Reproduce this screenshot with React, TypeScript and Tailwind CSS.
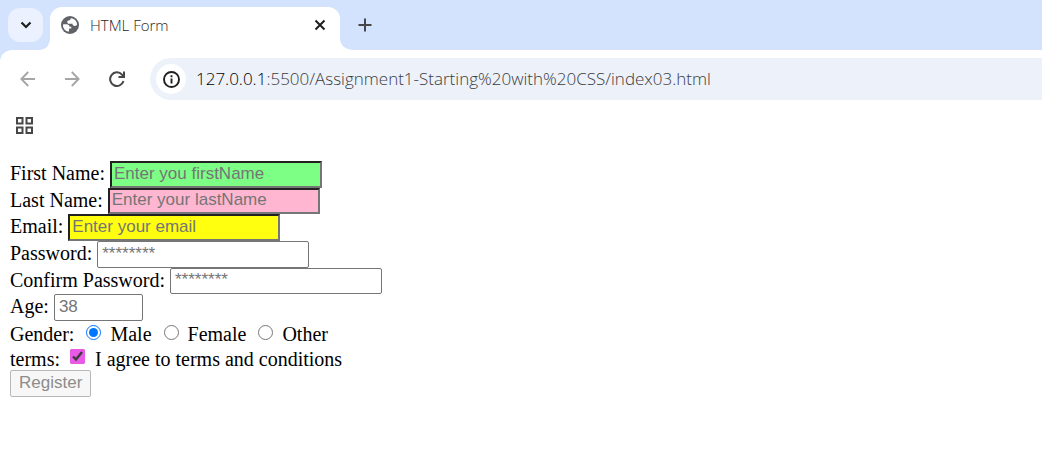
import { useState } from "react";
import type { InputHTMLAttributes } from "react";

function BrowserChrome() {
  return (
    <header className="bg-[#d3e3fd] font-['Open_Sans','Noto_Sans',sans-serif]">
      <div className="flex h-[50px] items-end">
        <div className="flex h-[50px] items-center pl-2">
          <button aria-label="Search tabs" className="flex h-[34px] w-[35px] items-center justify-center rounded-xl bg-[#ebf1fe]">
            <svg width="12" height="8" viewBox="0 0 12 8" fill="none" stroke="#1f1f1f" strokeWidth="2.2">
              <path d="M1.500 1.500 6 6l4.500-4.500" />
            </svg>
          </button>
        </div>
        <svg className="-ml-1 shrink-0" width="11" height="12" viewBox="0 0 11 12" fill="#fff">
          <path d="M0 12C7 12 11 7 11 0v12z" />
        </svg>
        <div className="flex h-[43px] w-[290px] shrink-0 items-center rounded-t-xl bg-white pr-[10px] pb-2 pl-[11px]">
          <svg width="18" height="18" viewBox="0 0 18 18">
            <circle cx="9" cy="9" r="9" fill="#5f6368" />
            <path
              fill="#fff"
              d="M2.200 8.300H5.500c1.900 0 3 .9 3 2.400h1.800v1.900H8v2.900C4.800 15.600 2 12.900 2 9.500zM10.800 2.300c3.200.8 5.300 3.500 5.300 6.500-.7.900-1.500 1.100-2.400 1.100-1.500 0-2.200-.8-2.200-2.100H8.200c-1.300 0-1.900-.8-1.900-1.800 0-1.100.7-1.800 1.900-1.800h.9c0-1.100.6-1.800 1.700-1.900z"
            />
          </svg>
          <span className="ml-[11px] flex-1 text-[15px] leading-5 font-light text-[#1f1f1f]">HTML Form</span>
          <button aria-label="Close tab" className="flex size-5 items-center justify-center">
            <svg width="12" height="12" viewBox="0 0 12 12" stroke="#1f1f1f" strokeWidth="2">
              <path d="m1.500 1.500 9 9m0-9-9 9" />
            </svg>
          </button>
        </div>
        <svg className="shrink-0" width="14" height="12" viewBox="0 0 14 12" fill="#fff">
          <path d="M0 0c0 7 5 12 14 12H0z" />
        </svg>
        <button aria-label="New tab" className="flex h-[50px] w-[22px] items-center justify-center">
          <svg width="14" height="14" viewBox="0 0 14 14" stroke="#474747" strokeWidth="2">
            <path d="M7 .5v13M.5 7h13" />
          </svg>
        </button>
      </div>
      <div className="rounded-tl-xl bg-white pt-2">
        <div className="flex h-[42px] items-center pl-5">
          <button aria-label="Back" className="flex size-4 items-center justify-center">
            <svg width="16" height="16" viewBox="0 0 16 16" fill="none" stroke="#a6a6a6" strokeWidth="1.900">
              <path d="M15 8H2M8.200 1 1.400 8l6.800 7" />
            </svg>
          </button>
          <button aria-label="Forward" className="ml-7 flex size-4 items-center justify-center">
            <svg width="16" height="16" viewBox="0 0 16 16" fill="none" stroke="#a6a6a6" strokeWidth="1.900">
              <path d="M1 8h13M7.800 1l6.800 7-6.800 7" />
            </svg>
          </button>
          <button aria-label="Reload" className="ml-[29px] flex size-4 items-center justify-center">
            <svg width="16" height="16" viewBox="0 0 16 16" fill="none" stroke="#474747" strokeWidth="2">
              <path d="M14.500 10A6.800 6.800 0 1 1 13 3.600L15 6M15 .5V6H9.500" />
            </svg>
          </button>
          <div className="ml-[25px] flex h-full flex-1 items-center rounded-l-full bg-[#ecf1fa] pl-[6px]">
            <button aria-label="View site information" className="flex size-[30px] items-center justify-center rounded-full bg-white">
              <svg width="17" height="17" viewBox="0 0 17 17" fill="none" stroke="#1f1f1f" strokeWidth="1.900">
                <circle cx="8.500" cy="8.500" r="7.500" />
                <path d="M8.500 7.500v5M8.500 4.200v2" />
              </svg>
            </button>
            <span className="ml-[10px] text-[17px] leading-6 font-light text-[#3c3c3c]">
              <span className="text-black">127.0.0.1</span>:5500/Assignment1-Starting%20with%20CSS/index03.html
            </span>
          </div>
        </div>
        <div className="flex h-[52px] items-center pb-[2px] pl-[15px]">
          <button aria-label="Apps" className="flex items-center justify-center">
            <svg width="19" height="19" viewBox="0 0 19 19" fill="none" stroke="#474747" strokeWidth="2">
              <path d="M2 2h5.500v5.500H2zM11.500 2H17v5.500h-5.500zM2 11.500h5.500V17H2zM11.500 11.500H17V17h-5.500z" />
            </svg>
          </button>
        </div>
      </div>
    </header>
  );
}

type FieldProps = InputHTMLAttributes<HTMLInputElement> & { id: string; label: string };

function Field({ id, label, className, ...rest }: FieldProps) {
  return (
    <div className="flex min-h-0 items-stretch gap-[5px]">
      <label htmlFor={id} className="leading-6">
        {label}
      </label>
      <input
        id={id}
        className={`pb-[2px] font-['Liberation_Sans',Arial,sans-serif] text-[17px] text-black placeholder:text-[#757575] ${className}`}
        {...rest}
      />
    </div>
  );
}

const inset = "w-[212px] border-2 border-t-[#212121] border-l-[#212121] border-r-[#767676] border-b-[#767676] px-[2px]";
const outlined = "rounded-xs border border-[#767676] px-1";

export default function App() {
  const [gender, setGender] = useState("Male");
  const [agreed, setAgreed] = useState(true);

  return (
    <div className="min-h-screen bg-white">
      <BrowserChrome />
      <main className="px-[10px] pt-[9px] font-['Liberation_Serif','Times_New_Roman',serif] text-[20px] text-black">
        <form onSubmit={(e) => e.preventDefault()}>
          <div className="grid h-40 grid-rows-6">
            <Field id="first" label="First Name:" placeholder="Enter you firstName" className={`${inset} bg-[#7dff86]`} />
            <Field id="last" label="Last Name:" placeholder="Enter your lastName" className={`${inset} bg-[#ffb6d0]`} />
            <Field id="email" type="email" label="Email:" placeholder="Enter your email" className={`${inset} bg-[#ffff0f]`} />
            <Field id="password" type="password" label="Password:" placeholder="********" className={`${outlined} w-[212px]`} />
            <Field id="confirm" type="password" label="Confirm Password:" placeholder="********" className={`${outlined} w-[212px]`} />
            <Field id="age" type="number" label="Age:" placeholder="38" className={`${outlined} w-[89px]`} />
          </div>
          <div role="radiogroup" aria-label="Gender" className="flex h-[26px] items-center leading-6">
            <span className="mr-3">Gender:</span>
            {["Male", "Female", "Other"].map((option) => (
              <label key={option} className="mr-3 flex items-center gap-[9px]">
                <input
                  type="radio"
                  name="gender"
                  className="mb-1 size-[15px] accent-[#0075ff]"
                  checked={gender === option}
                  onChange={() => setGender(option)}
                />
                {option}
              </label>
            ))}
          </div>
          <div className="flex h-[23px] items-center leading-6">
            <span className="mr-[10px]">terms:</span>
            <label className="flex items-center gap-[10px]">
              <input
                type="checkbox"
                className="mb-1 size-[15px] accent-[#e959e6]"
                checked={agreed}
                onChange={(e) => setAgreed(e.target.checked)}
              />
              I agree to terms and conditions
            </label>
          </div>
          <button
            type="submit"
            disabled
            className="flex h-[27px] items-center rounded-xs border border-[#b8b8b8] bg-[#f7f7f7] px-2 pb-[2px] font-['Liberation_Sans',Arial,sans-serif] text-[17px] text-[#8c8c8c]"
          >
            Register
          </button>
        </form>
      </main>
    </div>
  );
}
